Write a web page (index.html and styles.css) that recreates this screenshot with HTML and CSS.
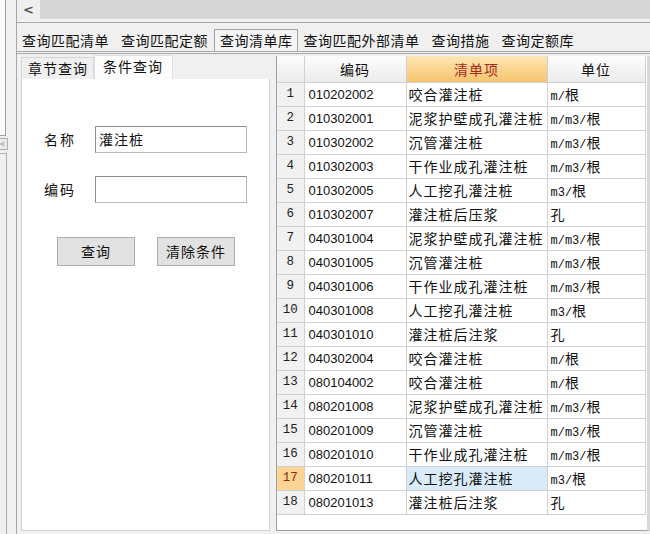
FILE: index.html
```html
<!DOCTYPE html>
<html lang="zh">
<head>
<meta charset="utf-8">
<title>查询清单库</title>
<link rel="stylesheet" href="styles.css">
</head>
<body>
<div class="side">
  <div class="side-top"></div>
  <div class="side-btn">&lt;</div>
  <div class="side-low"></div>
</div>
<div class="main">
  <div class="hscroll">
    <div class="hs-btn">&lt;</div>
    <div class="hs-track"></div>
  </div>
  <div class="toptabs">
    <span class="ttab">查询匹配清单</span>
    <span class="ttab">查询匹配定额</span>
    <span class="ttab active">查询清单库</span>
    <span class="ttab">查询匹配外部清单</span>
    <span class="ttab">查询措施</span>
    <span class="ttab">查询定额库</span>
  </div>
  <div class="content">
    <div class="leftpanel">
      <div class="ltabs">
        <span class="ltab">章节查询</span>
        <span class="ltab active">条件查询</span>
      </div>
      <div class="lbody">
        <div class="field">
          <span class="flabel">名称</span>
          <div class="finput">灌注桩</div>
        </div>
        <div class="field">
          <span class="flabel">编码</span>
          <div class="finput"></div>
        </div>
        <div class="buttons">
          <span class="btn">查询</span>
          <span class="btn">清除条件</span>
        </div>
      </div>
    </div>
    <div class="grid">
      <table>
        <colgroup><col class="c0"><col class="c1"><col class="c2"><col class="c3"></colgroup>
        <thead>
          <tr><th></th><th>编码</th><th class="hl">清单项</th><th>单位</th></tr>
        </thead>
        <tbody>
          <tr><td class="n">1</td><td class="code">010202002</td><td>咬合灌注桩</td><td class="u"><span class="a">m/</span>根</td></tr>
          <tr><td class="n">2</td><td class="code">010302001</td><td>泥浆护壁成孔灌注桩</td><td class="u"><span class="a">m/m3/</span>根</td></tr>
          <tr><td class="n">3</td><td class="code">010302002</td><td>沉管灌注桩</td><td class="u"><span class="a">m/m3/</span>根</td></tr>
          <tr><td class="n">4</td><td class="code">010302003</td><td>干作业成孔灌注桩</td><td class="u"><span class="a">m/m3/</span>根</td></tr>
          <tr><td class="n">5</td><td class="code">010302005</td><td>人工挖孔灌注桩</td><td class="u"><span class="a">m3/</span>根</td></tr>
          <tr><td class="n">6</td><td class="code">010302007</td><td>灌注桩后压浆</td><td class="u">孔</td></tr>
          <tr><td class="n">7</td><td class="code">040301004</td><td>泥浆护壁成孔灌注桩</td><td class="u"><span class="a">m/m3/</span>根</td></tr>
          <tr><td class="n">8</td><td class="code">040301005</td><td>沉管灌注桩</td><td class="u"><span class="a">m/m3/</span>根</td></tr>
          <tr><td class="n">9</td><td class="code">040301006</td><td>干作业成孔灌注桩</td><td class="u"><span class="a">m/m3/</span>根</td></tr>
          <tr><td class="n">10</td><td class="code">040301008</td><td>人工挖孔灌注桩</td><td class="u"><span class="a">m3/</span>根</td></tr>
          <tr><td class="n">11</td><td class="code">040301010</td><td>灌注桩后注浆</td><td class="u">孔</td></tr>
          <tr><td class="n">12</td><td class="code">040302004</td><td>咬合灌注桩</td><td class="u"><span class="a">m/</span>根</td></tr>
          <tr><td class="n">13</td><td class="code">080104002</td><td>咬合灌注桩</td><td class="u"><span class="a">m/</span>根</td></tr>
          <tr><td class="n">14</td><td class="code">080201008</td><td>泥浆护壁成孔灌注桩</td><td class="u"><span class="a">m/m3/</span>根</td></tr>
          <tr><td class="n">15</td><td class="code">080201009</td><td>沉管灌注桩</td><td class="u"><span class="a">m/m3/</span>根</td></tr>
          <tr><td class="n">16</td><td class="code">080201010</td><td>干作业成孔灌注桩</td><td class="u"><span class="a">m/m3/</span>根</td></tr>
          <tr class="sel"><td class="n">17</td><td class="code">080201011</td><td class="cur">人工挖孔灌注桩</td><td class="u"><span class="a">m3/</span>根</td></tr>
          <tr><td class="n">18</td><td class="code">080201013</td><td>灌注桩后注浆</td><td class="u">孔</td></tr>
        </tbody>
      </table>
    </div>
  </div>
</div>
</body>
</html>
```

FILE: styles.css
```css
html, body {
  margin: 0;
  padding: 0;
}
body {
  width: 650px;
  height: 534px;
  overflow: hidden;
  background: #f0f0f0;
  display: flex;
  font-family: "Noto Sans CJK SC", "Noto Sans", sans-serif;
  font-size: 14px;
  letter-spacing: 1px;
  color: #111;
}

/* left neighbouring window strip */
.side {
  width: 16px;
  flex: none;
  border-right: 1px solid #a6a6a6;
  display: flex;
  flex-direction: column;
}
.side-top {
  width: 5px;
  height: 135px;
  background: #fbfbfb;
  border-right: 1px solid #a0a0a0;
  border-bottom: 1px solid #a0a0a0;
}
.side-btn {
  margin-top: 2px;
  width: 7px;
  height: 10px;
  border: 1px solid #b0b0b0;
  border-left: none;
  background: #ececec;
  font-size: 9px;
  line-height: 10px;
  color: #888;
  overflow: hidden;
  letter-spacing: 0;
}
.side-low {
  margin-top: 3px;
  flex: 1;
  width: 6px;
  border-right: 1px solid #b0b0b0;
  border-top: 1px solid #b0b0b0;
}

.main {
  flex: 1;
  display: flex;
  flex-direction: column;
  min-width: 0;
}

.hscroll {
  display: flex;
  border-bottom: 1px solid #a9a9a9;
  box-sizing: border-box;
  height: 23px;
}
.hs-btn {
  width: 23px;
  height: 19px;
  font-family: "DejaVu Sans", sans-serif;
  font-size: 13px;
  font-weight: bold;
  color: #555;
  line-height: 19px;
  text-align: center;
  background: #efefef;
  letter-spacing: 0;
}
.hs-track {
  flex: 1;
  height: 19px;
  background: #d6d6d6;
}

.toptabs {
  height: 31px;
  box-sizing: border-box;
  padding: 8px 0 0 0;
  display: flex;
  align-items: flex-end;
  border-bottom: 3px double #a9a9a9;
  background: #f0f0f0;
}
.ttab {
  padding: 0 6px 1px 6px;
  font-size: 14px;
  letter-spacing: 0.5px;
  line-height: 20px;
}
.ttab:first-child { padding-left: 5px; }
.ttab.active {
  border: 1px solid #a3a3a3;
  border-bottom: none;
  background: #f4f4f4;
  padding: 0 4px 0 5px;
  line-height: 21px;
}

.content {
  flex: 1;
  display: flex;
  gap: 6px;
  min-height: 0;
}

.leftpanel {
  width: 253px;
  flex: none;
  display: flex;
  flex-direction: column;
  padding: 1px 0 3px 4px;
  box-sizing: border-box;
}
.ltabs {
  display: flex;
  align-items: flex-end;
  height: 24px;
}
.ltab {
  box-sizing: border-box;
  height: 22px;
  line-height: 21px;
  padding: 0 5px 0 6px;
  background: #efefef;
  border: 1px solid #d5d5d5;
  border-bottom: none;
}
.ltab.active {
  height: 24px;
  line-height: 20px;
  padding: 0 9px 0 8px;
  background: #fcfcfc;
  border-color: #e0e0e0;
}
.lbody {
  flex: 1;
  background: #fff;
  border: 1px solid #d0d0d0;
  border-top: none;
  padding-top: 47px;
}
.field {
  display: flex;
  align-items: center;
  height: 26px;
  margin-bottom: 24px;
}
.flabel {
  width: 73px;
  box-sizing: border-box;
  padding-left: 22px;
  letter-spacing: 2px;
}
.finput {
  width: 152px;
  height: 27px;
  box-sizing: border-box;
  border: 1px solid #8f8f8f;
  border-color: #8f8f8f #b9b9b9 #b9b9b9 #8f8f8f;
  background: #fff;
  padding: 0 3px;
  line-height: 24px;
}
.buttons {
  display: flex;
  gap: 22px;
  padding-left: 35px;
  margin-top: 35px;
}
.btn {
  width: 78px;
  height: 29px;
  box-sizing: border-box;
  border: 1px solid #adadad;
  background: #e1e1e1;
  text-align: center;
  line-height: 26px;
  letter-spacing: 1px;
}

.grid {
  flex: 1;
  margin-top: 2px;
  margin-bottom: 3px;
  background: #fff;
  border-left: 1px solid #a0a0a0;
  border-right: 3px solid #d9d9d9;
  border-bottom: 1px solid #a0a0a0;
  overflow: hidden;
}
table {
  border-collapse: collapse;
  table-layout: fixed;
  width: 368px;
}
.c0 { width: 27px; }
.c1 { width: 102px; }
.c2 { width: 141px; }
.c3 { width: 98px; }

th {
  height: 26px;
  font-weight: normal;
  background: linear-gradient(#fdfdfd, #ebebeb);
  border: 1px solid #d0d0d0;
  border-top: none;
  padding: 0;
  text-align: center;
  letter-spacing: 1px;
  line-height: 18px;
}
th:first-child { border-left: none; }
th.hl {
  background: linear-gradient(#fde7b4, #f6c46c);
  color: #a3281b;
}
td {
  height: 23px;
  border: 1px solid #cfcfcf;
  padding: 0 0 0 2px;
  white-space: nowrap;
  overflow: hidden;
  line-height: 17px;
}
td:first-child { border-left: none; }
td.n {
  background: #f1f1f1;
  text-align: center;
  padding: 0;
  font-family: "Liberation Mono", monospace;
  font-size: 12.5px;
  letter-spacing: 0;
  color: #222;
}
td.code {
  font-family: "Liberation Sans", sans-serif;
  font-size: 13px;
  letter-spacing: 0;
  padding-left: 4px;
}
td.u {
  padding-left: 3px;
  letter-spacing: 0;
}
td.u .a {
  font-family: "Liberation Mono", monospace;
  font-size: 12px;
  line-height: 12px;
}
tr.sel td.n {
  background: #fcd594;
  color: #8a2a14;
}
td.cur {
  background: #d9eaf8;
}
```
